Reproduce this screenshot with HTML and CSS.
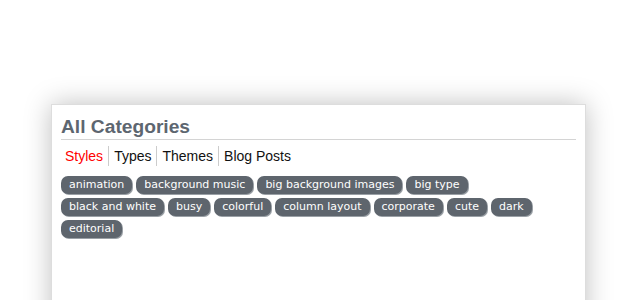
FILE: index.html
```html
<!DOCTYPE html>
<html lang="en">
<head>
    <meta charset="UTF-8">
    <title>All Categories</title>
    <link rel="stylesheet" href="styles.css">
</head>
<body>

<div class="panel">
    <h2>All Categories</h2>
    <ul class="tabs">
        <li class="active">Styles</li>
        <li>Types</li>
        <li>Themes</li>
        <li>Blog Posts</li>
    </ul>
    <div class="tags">
        <span class="tag">animation</span>
        <span class="tag">background music</span>
        <span class="tag">big background images</span>
        <span class="tag">big type</span>
        <span class="tag">black and white</span>
        <span class="tag">busy</span>
        <span class="tag">colorful</span>
        <span class="tag">column layout</span>
        <span class="tag">corporate</span>
        <span class="tag">cute</span>
        <span class="tag">dark</span>
        <span class="tag">editorial</span>
    </div>
</div>

</body>
</html>
```

FILE: styles.css
```css
* {
    margin: 0;
    padding: 0;
    box-sizing: border-box;
}

body {
    background: #fff;
    font-family: 'Liberation Sans', Arial, sans-serif;
    padding: 104px 0 0 51px;
    overflow: hidden;
    height: 300px;
}

.panel {
    width: 535px;
    height: 260px;
    background: #fff;
    border: 1px solid #ddd;
    box-shadow: 0 0 25px rgba(0, 0, 0, 0.25);
    padding: 10px 9px;
}

.panel h2 {
    font-size: 19.2px;
    font-weight: bold;
    color: #5d6670;
    line-height: 24px;
    border-bottom: 1px solid #d4d4d4;
}

.tabs {
    list-style: none;
    display: flex;
    margin-top: 6px;
}

.tabs li {
    font-size: 14px;
    color: #111;
    line-height: 20px;
    padding: 0 5px;
    border-left: 1px solid #ccc;
}

.tabs li:first-child {
    border-left: none;
    padding-left: 4px;
}

.tabs .active {
    color: #f00;
}

.tags {
    display: flex;
    flex-wrap: wrap;
    gap: 4px;
    margin-top: 10px;
    max-width: 480px;
}

.tag {
    font-family: 'DejaVu Sans', Verdana, sans-serif;
    font-size: 11px;
    color: #fff;
    background: #5e656d;
    line-height: 18px;
    height: 18px;
    padding: 0 8px;
    border-radius: 7px;
    box-shadow: 1px 1px 0 #9aa0a6;
}
```
